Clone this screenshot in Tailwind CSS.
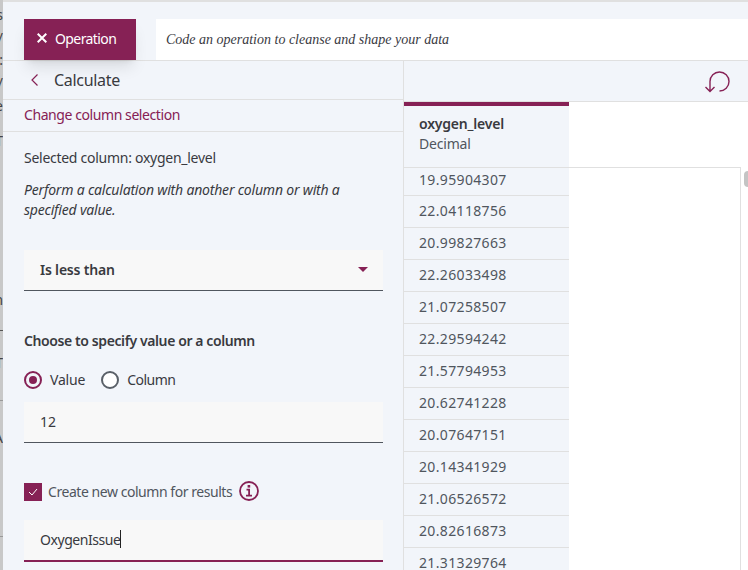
<!DOCTYPE html>
<html><head><meta charset="utf-8"><script src="https://cdn.jsdelivr.net/npm/@tailwindcss/browser@4"></script></head>
<body class="w-[748px] h-[570px] overflow-hidden bg-white font-['Noto_Sans',sans-serif] text-[#393a3f] text-[14px]">
<div class="relative flex w-full h-full">
  <div class="relative w-[3px] h-full bg-[#c8c8c8] shrink-0 overflow-hidden text-[#444] text-[14px] leading-[16px]">
    <span class="absolute right-0 top-[7px]">s</span>
    <span class="absolute right-0 top-[30px]">/</span>
    <span class="absolute right-0 top-[52px]">:</span>
    <span class="absolute right-0 top-[75px]">/</span>
    <span class="absolute right-0 top-[98px]">e</span>
    <span class="absolute right-0 top-[133px]">T</span>
    <span class="absolute right-0 top-[292px]">m</span>
    <span class="absolute left-0 top-[330px] w-full h-px bg-[#555]"></span>
    <span class="absolute right-0 top-[355px]">T</span>
    <span class="absolute left-0 top-[400px] w-full h-px bg-[#999]"></span>
    <span class="absolute right-0 top-[430px]">A</span>
    <span class="absolute left-0 top-[536px] w-full h-px bg-[#999]"></span>
  </div>
  <div class="flex-1 flex flex-col min-w-0">
    <div class="h-[61px] shrink-0 bg-[#f2f5fa] border-t-2 border-b border-[#e0e0e0] flex items-end pl-[21px] relative">
      <div class="w-[112px] h-[41px] bg-[#862155] text-white flex items-center pl-[13px] pb-[3px] gap-[8px] shadow-lg relative">
        <svg width="10" height="10" viewBox="0 0 10 10" fill="none" stroke="white" stroke-width="2"><path d="M.7.7l8.600 8.600M9.300.7L.7 9.300"/></svg>
        <span class="tracking-[-0.6px]">Operation</span>
      </div>
      <div class="ml-[20px] flex-1 h-[41px] bg-white flex items-center pl-[10px] font-['Liberation_Serif',serif] italic text-[14px]">Code an operation to cleanse and shape your data</div>
    </div>
    <div class="flex flex-1 min-h-0">
      <div class="w-[401px] shrink-0 bg-[#f2f5fa] border-r border-[#e0e0e0] flex flex-col">
        <div class="h-[39px] shrink-0 flex items-center border-b border-[#e0e0e0] pl-[27px]">
          <svg width="9" height="14" viewBox="0 0 9 14" fill="none" stroke="#862155" stroke-width="1.200"><path d="M7.500 1.500L2 7l5.500 5.500"/></svg>
          <span class="ml-[15px] text-[16px] leading-none tracking-[-0.3px]">Calculate</span>
        </div>
        <div class="h-[32px] shrink-0 flex items-center border-b border-[#e0e0e0] pl-[21px] pb-[3px] text-[#862155] tracking-[-0.42px]">Change column selection</div>
        <div class="pl-[21px] pr-[20px] flex flex-col">
          <p class="mt-[16px] leading-[20px] tracking-[-0.27px]">Selected column: oxygen_level</p>
          <p class="mt-[12px] leading-[20px] italic tracking-[-0.2px]">Perform a calculation with another column or with a specified value.</p>
          <div class="mt-[30px] h-[41px] bg-[#f8f8f8] border-b border-[#50565e] flex items-center justify-between pl-[16px] pr-[15px]">
            <span class="font-semibold tracking-[-0.2px] -mt-[2px]">Is less than</span>
            <span class="w-0 h-0 border-x-[5px] border-x-transparent border-t-[5px] border-t-[#862155] -mt-[2px]"></span>
          </div>
          <p class="mt-[40px] font-semibold leading-[20px] tracking-[-0.4px]">Choose to specify value or a column</p>
          <div class="mt-[19px] flex items-center h-[20px]">
            <span class="w-[18px] h-[18px] rounded-full border-2 border-[#862155] flex items-center justify-center"><span class="w-[8px] h-[8px] rounded-full bg-[#862155]"></span></span>
            <span class="ml-[8px] -mt-[2px] tracking-[-0.2px]">Value</span>
            <span class="ml-[16px] w-[18px] h-[18px] rounded-full border-2 border-[#5a6068] bg-white"></span>
            <span class="ml-[8px] -mt-[2px] tracking-[-0.5px]">Column</span>
          </div>
          <div class="mt-[12px] h-[41px] bg-[#f8f8f8] border-b border-[#50565e] flex items-center pl-[16px] pb-[2px]">12</div>
          <div class="mt-[39px] flex items-center h-[20px]">
            <span class="w-[18px] h-[18px] bg-[#862155] flex items-center justify-center"><svg width="10" height="8" viewBox="0 0 10 8" fill="none" stroke="white" stroke-width="1"><path d="M1 4l3 3 5-6"/></svg></span>
            <span class="ml-[6px] -mt-[1px] tracking-[-0.45px] text-[#50565e]">Create new column for results</span>
            <svg class="ml-[7px] -mt-[3px]" width="20" height="20" viewBox="0 0 20 20" fill="none"><circle cx="10" cy="10" r="9" stroke="#862155" stroke-width="1.800"/><rect x="8.600" y="4" width="2.600" height="2.600" fill="#862155"/><path d="M7.500 8.600h2.600v6M7 14.700h6" stroke="#862155" stroke-width="1.800"/></svg>
          </div>
          <div class="mt-[18px] h-[42px] bg-[#f8f8f8] border-b-2 border-[#862155] flex items-center pl-[16px] pb-[2px]"><span class="tracking-[-0.45px]">OxygenIssue</span><span class="w-px h-[18px] bg-[#222]"></span></div>
        </div>
      </div>
      <div class="flex-1 flex flex-col min-w-0">
        <div class="h-[41px] shrink-0 bg-[#f2f5fa] border-b border-[#e0e0e0] flex items-center justify-end pr-[18px]">
          <svg width="26" height="24" viewBox="0 0 26 24" fill="none" stroke="#862155" stroke-width="1.400"><path d="M15.500 22A9.500 9.500 0 1 0 6 12.500V22M1.500 18l4.500 4.500 4.500-4.500"/></svg>
        </div>
        <div class="flex-1 relative min-h-0 bg-white text-[#50565e]">
          <div class="absolute left-0 top-[65px] w-[336px] h-px bg-[#e0e0e0]"></div>
          <div class="absolute left-[336px] top-[65px] bottom-0 border-l border-[#e0e0e0]"></div>
          <div class="absolute left-[340px] top-[69px] w-[4px] h-[16px] bg-[#c4c4c4] rounded-l-sm"></div>
          <div class="w-[165px] flex flex-col tracking-[0.35px]">
            <div class="h-[65px] bg-[#f2f5fa] border-t-4 border-[#862155] pl-[15px] pt-[8px] tracking-[-0.2px]">
              <div class="font-semibold leading-[20px] text-[#393a3f]">oxygen_level</div>
              <div class="leading-[20px]">Decimal</div>
            </div>
            <div class="h-[28px] mt-px bg-[#f2f5fa] border-b border-[#e0e0e0] pl-[15px] pb-[5px] flex items-center">19.95904307</div>
            <div class="h-[32px] bg-[#f2f5fa] border-b border-[#e0e0e0] pl-[15px] pb-[2px] flex items-center">22.04118756</div>
            <div class="h-[32px] bg-[#f2f5fa] border-b border-[#e0e0e0] pl-[15px] pb-[2px] flex items-center">20.99827663</div>
            <div class="h-[32px] bg-[#f2f5fa] border-b border-[#e0e0e0] pl-[15px] pb-[2px] flex items-center">22.26033498</div>
            <div class="h-[32px] bg-[#f2f5fa] border-b border-[#e0e0e0] pl-[15px] pb-[2px] flex items-center">21.07258507</div>
            <div class="h-[32px] bg-[#f2f5fa] border-b border-[#e0e0e0] pl-[15px] pb-[2px] flex items-center">22.29594242</div>
            <div class="h-[32px] bg-[#f2f5fa] border-b border-[#e0e0e0] pl-[15px] pb-[2px] flex items-center">21.57794953</div>
            <div class="h-[32px] bg-[#f2f5fa] border-b border-[#e0e0e0] pl-[15px] pb-[2px] flex items-center">20.62741228</div>
            <div class="h-[32px] bg-[#f2f5fa] border-b border-[#e0e0e0] pl-[15px] pb-[2px] flex items-center">20.07647151</div>
            <div class="h-[32px] bg-[#f2f5fa] border-b border-[#e0e0e0] pl-[15px] pb-[2px] flex items-center">20.14341929</div>
            <div class="h-[32px] bg-[#f2f5fa] border-b border-[#e0e0e0] pl-[15px] pb-[2px] flex items-center">21.06526572</div>
            <div class="h-[32px] bg-[#f2f5fa] border-b border-[#e0e0e0] pl-[15px] pb-[2px] flex items-center">20.82616873</div>
            <div class="h-[32px] bg-[#f2f5fa] border-b border-[#e0e0e0] pl-[15px] pb-[2px] flex items-center">21.31329764</div>
          </div>
        </div>
      </div>
    </div>
  </div>
</div>
</body></html>
